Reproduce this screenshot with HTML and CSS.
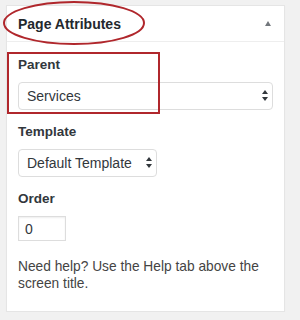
FILE: index.html
```html
<!DOCTYPE html>
<html lang="en">
<head>
  <meta charset="UTF-8">
  <meta name="viewport" content="width=device-width, initial-scale=1.0">
  <title>Page Attributes</title>
  <link rel="stylesheet" href="styles.css">
</head>
<body>
  <div class="postbox">
    <div class="hndle">
      <h2 class="hndle-title">Page Attributes</h2>
      <span class="toggle-indicator"></span>
    </div>
    <div class="inside">
      <p class="label first">Parent</p>
      <div class="select-wrap">
        <select class="select-full">
          <option>Services</option>
        </select>
      </div>
      <p class="label">Template</p>
      <div class="select-wrap select-wrap-small">
        <select class="select-small">
          <option>Default Template</option>
        </select>
      </div>
      <p class="label">Order</p>
      <input class="order" type="text" value="0">
      <p class="help">Need help? Use the Help tab above the screen title.</p>
    </div>
  </div>
  <!-- red marks drawn over the screenshot -->
  <svg class="marks" width="300" height="320" viewBox="0 0 300 320">
    <ellipse cx="74" cy="23" rx="70" ry="21" fill="none" stroke="#b0272c" stroke-width="2"/>
    <rect x="8" y="53" width="151" height="60" fill="none" stroke="#b0272c" stroke-width="2"/>
  </svg>
</body>
</html>
```

FILE: styles.css
```css
*{
  margin: 0;
  padding: 0;
  box-sizing: border-box;
}
body{
  position: relative;
  background: #f1f1f1;
  font-family: "Liberation Sans", Arial, sans-serif;
  color: #23282d;
}
.postbox{
  width: 279px;
  margin: 5px 0 0 6px;
  background: #fff;
  border: 1px solid #e5e5e5;
  box-shadow: 0 1px 1px rgba(0,0,0,.04);
}
.hndle{
  height: 36px;
  border-bottom: 1px solid #eee;
  display: flex;
  align-items: center;
  justify-content: space-between;
  padding: 0 13px 0 11px;
}
.hndle-title{
  font-size: 14px;
  font-weight: bold;
  color: #23282d;
}
.toggle-indicator{
  width: 0;
  height: 0;
  border-left: 3.5px solid transparent;
  border-right: 3.5px solid transparent;
  border-bottom: 5px solid #72777c;
}
.inside{
  padding: 0 11px 19px 11px;
}
.label{
  font-size: 13.5px;
  font-weight: bold;
  line-height: 18px;
  margin: 13px 0 8px;
  color: #32373c;
}
.label.first{
  margin-top: 14px;
}
.select-wrap{
  position: relative;
}
.select-wrap-small{
  width: 139px;
}
.select-wrap::before,
.select-wrap::after{
  content: "";
  position: absolute;
  right: 5px;
  width: 0;
  height: 0;
  border-left: 3px solid transparent;
  border-right: 3px solid transparent;
  pointer-events: none;
}
.select-wrap::before{
  top: 8px;
  border-bottom: 4px solid #32373c;
}
.select-wrap::after{
  top: 15px;
  border-top: 4px solid #32373c;
}
select{
  -webkit-appearance: none;
  appearance: none;
  display: block;
  width: 100%;
  height: 28px;
  border: 1px solid #ddd;
  border-radius: 4px;
  background: #fff;
  padding: 0 20px 0 8px;
  font-family: "Liberation Sans", Arial, sans-serif;
  font-size: 14px;
  color: #32373c;
  outline: none;
}
.order{
  display: block;
  width: 48px;
  height: 25px;
  border: 1px solid #ddd;
  box-shadow: inset 0 1px 2px rgba(0,0,0,.07);
  padding: 0 6px;
  font-family: "Liberation Sans", Arial, sans-serif;
  font-size: 14px;
  color: #32373c;
  outline: none;
}
.help{
  margin-top: 17px;
  font-size: 13.75px;
  line-height: 17px;
  color: #444;
}
.marks{
  position: absolute;
  top: 0;
  left: 0;
  pointer-events: none;
}
```
